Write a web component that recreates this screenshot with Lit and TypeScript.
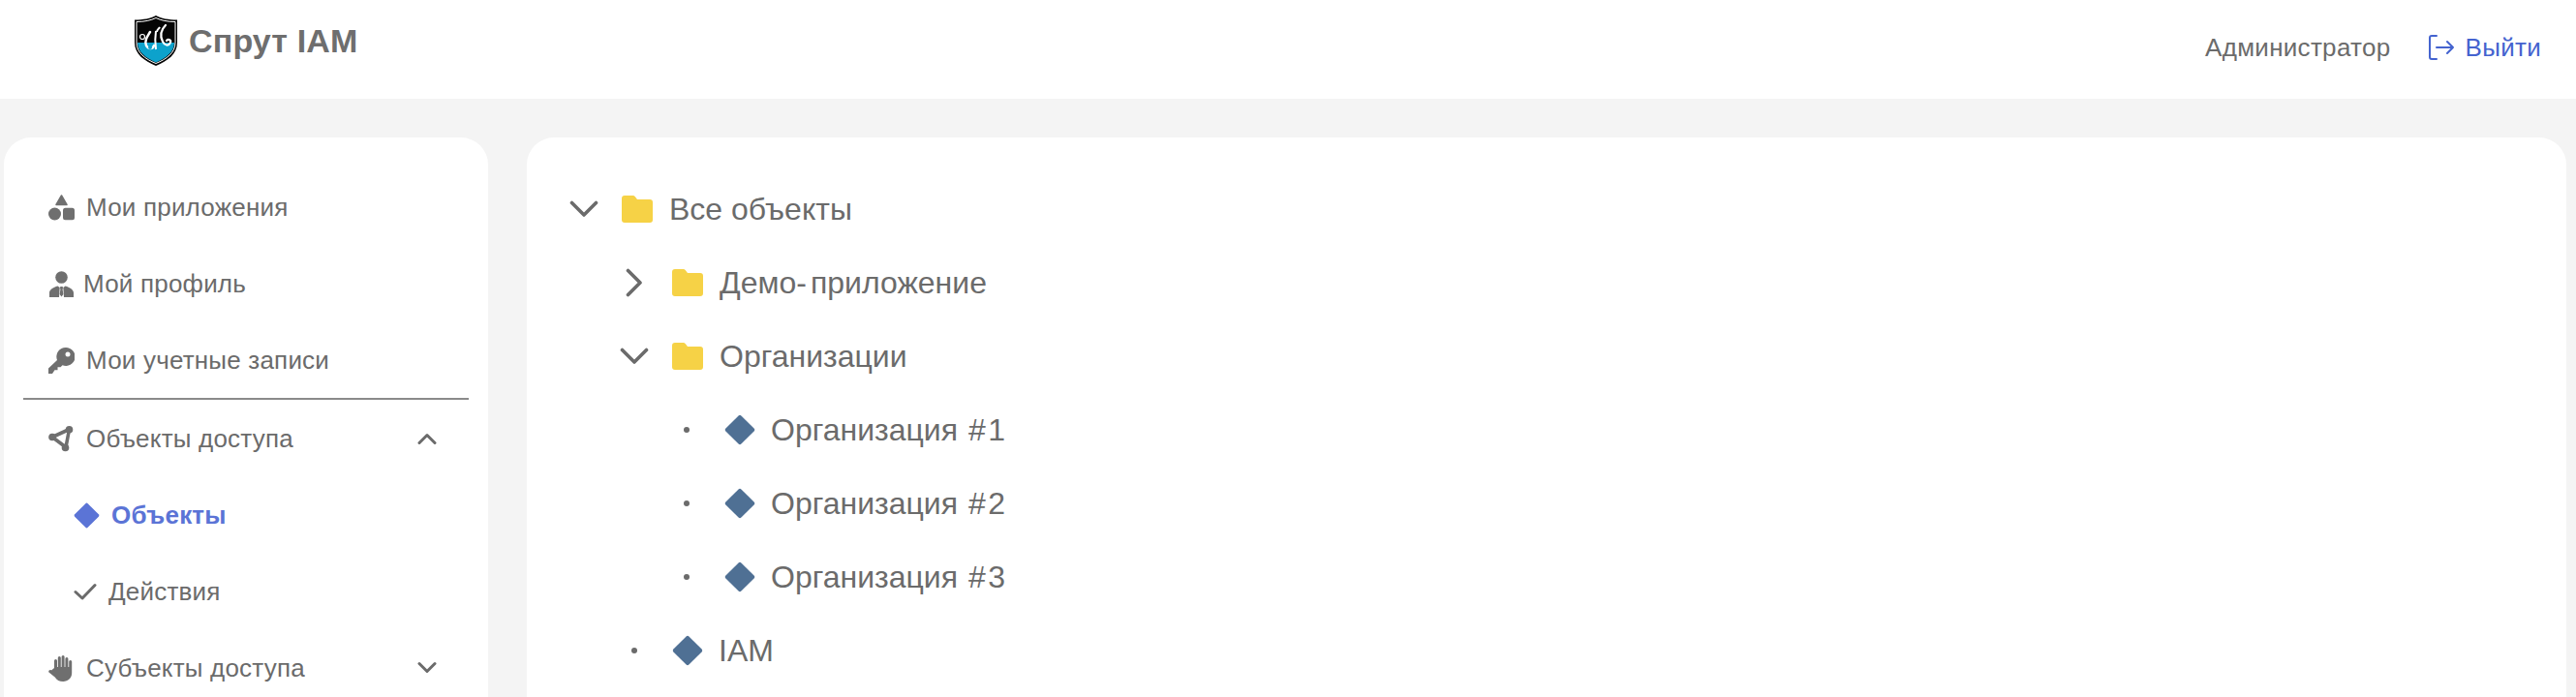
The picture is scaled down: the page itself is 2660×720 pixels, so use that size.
import { LitElement, html, css, svg } from "lit";
import { customElement } from "lit/decorators.js";

const diamond = (c: string) => html`<svg class="dia" viewBox="0 0 32 32"><path d="M14.600 1.400a2 2 0 0 1 2.800 0l13.200 13.200a2 2 0 0 1 0 2.800L17.400 30.600a2 2 0 0 1-2.800 0L1.400 17.400a2 2 0 0 1 0-2.800z" fill="${c}"/></svg>`;
const folder = html`<svg class="folder" viewBox="0 0 32 28"><path d="M3 0h8.500c1 0 1.800.4 2.400 1.200L16 4h13a3 3 0 0 1 3 3v18a3 3 0 0 1-3 3H3a3 3 0 0 1-3-3V3a3 3 0 0 1 3-3z" fill="#f6d246"/></svg>`;
const chevron = (dir: string) => html`<svg class="chev ${dir}" viewBox="0 0 30 30"><path d="M2.500 8.500 15 21 27.500 8.500" fill="none" stroke="#6b6b6b" stroke-width="3.600" stroke-linecap="round" stroke-linejoin="round"/></svg>`;
const smallChev = (up: boolean) => html`<svg class="schev" viewBox="0 0 20 14"><path d="${up ? "M2 11.500 10 3.500 18 11.500" : "M2 2.500 10 10.500 18 2.500"}" fill="none" stroke="#6b6b6b" stroke-width="3" stroke-linecap="round" stroke-linejoin="round"/></svg>`;

const icons: Record<string, unknown> = {
  apps: svg`<path d="M13.500 1 19 10.500H8z" fill="#6f6f6f" stroke="#6f6f6f" stroke-width="1.500" stroke-linejoin="round"/><circle cx="6.500" cy="20" r="6.500" fill="#6f6f6f"/><rect x="15" y="13.800" width="12" height="12.500" rx="2.500" fill="#6f6f6f"/>`,
  user: svg`<circle cx="13.500" cy="6.500" r="6.300" fill="#6f6f6f"/><path d="M1 27v-4.500c0-3.500 4-5.500 8.500-7l2.200 1.500-.7 10zM26 27v-4.500c0-3.500-4-5.500-8.500-7L15.300 17l.7 10z" fill="#6f6f6f"/><path d="M12.300 16h2.400l.3 1.800-.4 1.200.8 5-1.900 2.500-1.900-2.500.8-5-.4-1.200z" fill="#6f6f6f"/>`,
  key: svg`<path d="M18 0a9.500 9.500 0 1 1-3.500 18.300L12.500 20.300H9.500V23.300H6.500L4 27H0v-5.500l9-8.500A9.500 9.500 0 0 1 18 0z" fill="#6f6f6f"/><circle cx="20" cy="7" r="2.500" fill="#fff"/>`,
  nodes: svg`<path d="M4 11.500 21.500 3.500 18 22z" fill="none" stroke="#6f6f6f" stroke-width="3.600" stroke-linejoin="round"/><circle cx="4" cy="11.500" r="3.800" fill="#6f6f6f"/><circle cx="21.500" cy="3.800" r="3.800" fill="#6f6f6f"/><circle cx="17.500" cy="22.500" r="3.800" fill="#6f6f6f"/>`,
  hand: svg`<path d="M6 13V5.500a1.500 1.500 0 0 1 3 0V12h.8V2.500a1.500 1.500 0 0 1 3 0V12h.8V1.500a1.500 1.500 0 0 1 3 0V12h.8V3.500a1.500 1.500 0 0 1 3 0V12h.8V6.500a1.500 1.500 0 0 1 3 0V18c0 5.500-4 9-9 9-4 0-6.500-1.500-8.500-4.500L.5 17.500c-1-1.500 1-3.200 2.500-2z" fill="#6f6f6f"/>`,
};
const navIcon = (k: string) => html`<svg class="nicon" viewBox="0 0 27 27">${icons[k]}</svg>`;

@customElement("app-root")
export class AppRoot extends LitElement {
  static styles = css`
    :host { display: block; height: 720px; overflow: hidden; background: #f4f4f4; color: #6b6b6b; font-family: "Liberation Sans", Arimo, sans-serif; }
    * { box-sizing: border-box; }
    header { height: 102px; background: #fff; display: flex; align-items: flex-start; padding: 0 36px 0 138px; }
    .logo { width: 46px; height: 52px; margin-top: 16px; flex: none; }
    .brand { font-size: 34px; font-weight: 700; color: #6e6e6e; margin: 21px 0 0 11px; line-height: 42px; letter-spacing: 0.15px; }
    .right { margin-left: auto; display: flex; align-items: center; height: 98px; font-size: 26px; letter-spacing: 0.3px; }
    .logout { display: flex; align-items: center; color: #4463cf; margin-left: 38px; gap: 11px; }
    .logout svg { width: 28px; height: 28px; }
    .body { display: flex; padding: 40px 10px 0 4px; gap: 40px; }
    .side { width: 500px; height: 640px; background: #fff; border-radius: 28px 28px 0 0; padding: 32px 20px 0; flex: none; }
    .nav { height: 79px; display: flex; align-items: center; padding: 1px 0 0 26px; font-size: 26px; letter-spacing: 0.2px; }
    .nav.sub { padding-left: 52px; }
    .nicon { width: 27px; height: 27px; margin-right: 12px; flex: none; }
    .nav.user .nicon { margin-right: 9px; }
    .schev { width: 20px; height: 14px; margin-left: auto; margin-right: 33px; }
    hr { border: 0; height: 2px; background: #8a8a8a; margin: 0; }
    .nav.active { color: #5b74d6; font-weight: 700; }
    .nav .dia { width: 27px; height: 27px; margin-right: 12px; }
    .check { width: 24px; height: 18px; margin-right: 12px; }
    .tree { flex: 1; height: 640px; background: #fff; border-radius: 28px 28px 0 0; padding: 36px 0 0 44px; }
    .row { height: 76px; display: flex; align-items: center; font-size: 32px; }
    .l1 { padding-left: 52px; }
    .l2 { padding-left: 106px; }
    .twist { width: 30px; height: 30px; margin-right: 24px; display: flex; align-items: center; justify-content: center; flex: none; }
    .chev { width: 30px; height: 30px; }
    .chev.right { transform: rotate(-90deg); }
    .dot { width: 6px; height: 6px; border-radius: 50%; background: #6b6b6b; }
    .folder { width: 32px; height: 28px; margin-right: 17px; flex: none; }
    .row .dia { width: 32px; height: 32px; margin-right: 16px; flex: none; }
    .hy { letter-spacing: 4px; }
    .num { letter-spacing: 2.500px; margin-left: 2px; }
  `;

  render() {
    const blue = "#4f7094";
    return html`
      <header>
        <svg class="logo" viewBox="0 0 46 52">
          <path d="M23 0c5 3 13 4.500 22 4.500V28c0 12-10 19-22 24C11 47 1 40 1 28V4.500C10 4.500 18 3 23 0z" fill="#050505"/>
          <path d="M23 2.500c5 2.500 12 4 20 4V28c0 10.500-9 17-20 21.500C12 45 3 38.500 3 28V6.500c8 0 15-1.500 20-4z" fill="none" stroke="#fff" stroke-width="1"/>
          <path d="M4 28h38c0 10-9 16-19 20.500C13 44 4 38 4 28z" fill="#0da2cc"/>
          <path d="M17 17c-3 5-6 9-4 14 2 4 7 4 8 0" fill="none" stroke="#fff" stroke-width="2.500" stroke-linecap="round"/>
          <path d="M23 16c-1 6-1 12 0 19M24 17c0-3 2-3 3-5" fill="none" stroke="#fff" stroke-width="2"/>
          <path d="M33 10c-5 5-6 11-3 17 2 4 6 5 8 1 1-3-3-4-4-2" fill="none" stroke="#fff" stroke-width="2.200" stroke-linecap="round"/>
          <circle cx="9" cy="22" r="2.500" fill="none" stroke="#fff" stroke-width="1.200"/>
          <circle cx="17" cy="33" r="2" fill="#0da2cc"/>
        </svg>
        <div class="brand">Спрут IAM</div>
        <div class="right">
          <span>Администратор</span>
          <span class="logout">
            <svg viewBox="0 0 28 28"><path d="M9 2H4a2 2 0 0 0-2 2v20a2 2 0 0 0 2 2h5M9 14h17M20 8l6 6-6 6" fill="none" stroke="#4463cf" stroke-width="2" stroke-linecap="round" stroke-linejoin="round"/></svg>
            <span>Выйти</span>
          </span>
        </div>
      </header>
      <div class="body">
        <aside class="side">
          <div class="nav">${navIcon("apps")}Мои приложения</div>
          <div class="nav user">${navIcon("user")}Мой профиль</div>
          <div class="nav">${navIcon("key")}Мои учетные записи</div>
          <hr />
          <div class="nav">${navIcon("nodes")}Объекты доступа${smallChev(true)}</div>
          <div class="nav sub active">${diamond("#5b74d6")}Объекты</div>
          <div class="nav sub"><svg class="check" viewBox="0 0 24 18"><path d="M2 9.500 9 16 22 2.500" fill="none" stroke="#6b6b6b" stroke-width="3" stroke-linecap="round" stroke-linejoin="round"/></svg>Действия</div>
          <div class="nav">${navIcon("hand")}Субъекты доступа${smallChev(false)}</div>
        </aside>
        <main class="tree">
          <div class="row"><span class="twist">${chevron("down")}</span>${folder}<span>Все объекты</span></div>
          <div class="row l1"><span class="twist">${chevron("right")}</span>${folder}<span>Демо<span class="hy">-</span>приложение</span></div>
          <div class="row l1"><span class="twist">${chevron("down")}</span>${folder}<span>Организации</span></div>
          ${[1, 2, 3].map((n) => html`<div class="row l2"><span class="twist"><span class="dot"></span></span>${diamond(blue)}<span>Организация <span class="num">#${n}</span></span></div>`)}
          <div class="row l1"><span class="twist"><span class="dot"></span></span>${diamond(blue)}<span>IAM</span></div>
        </main>
      </div>
    `;
  }
}
